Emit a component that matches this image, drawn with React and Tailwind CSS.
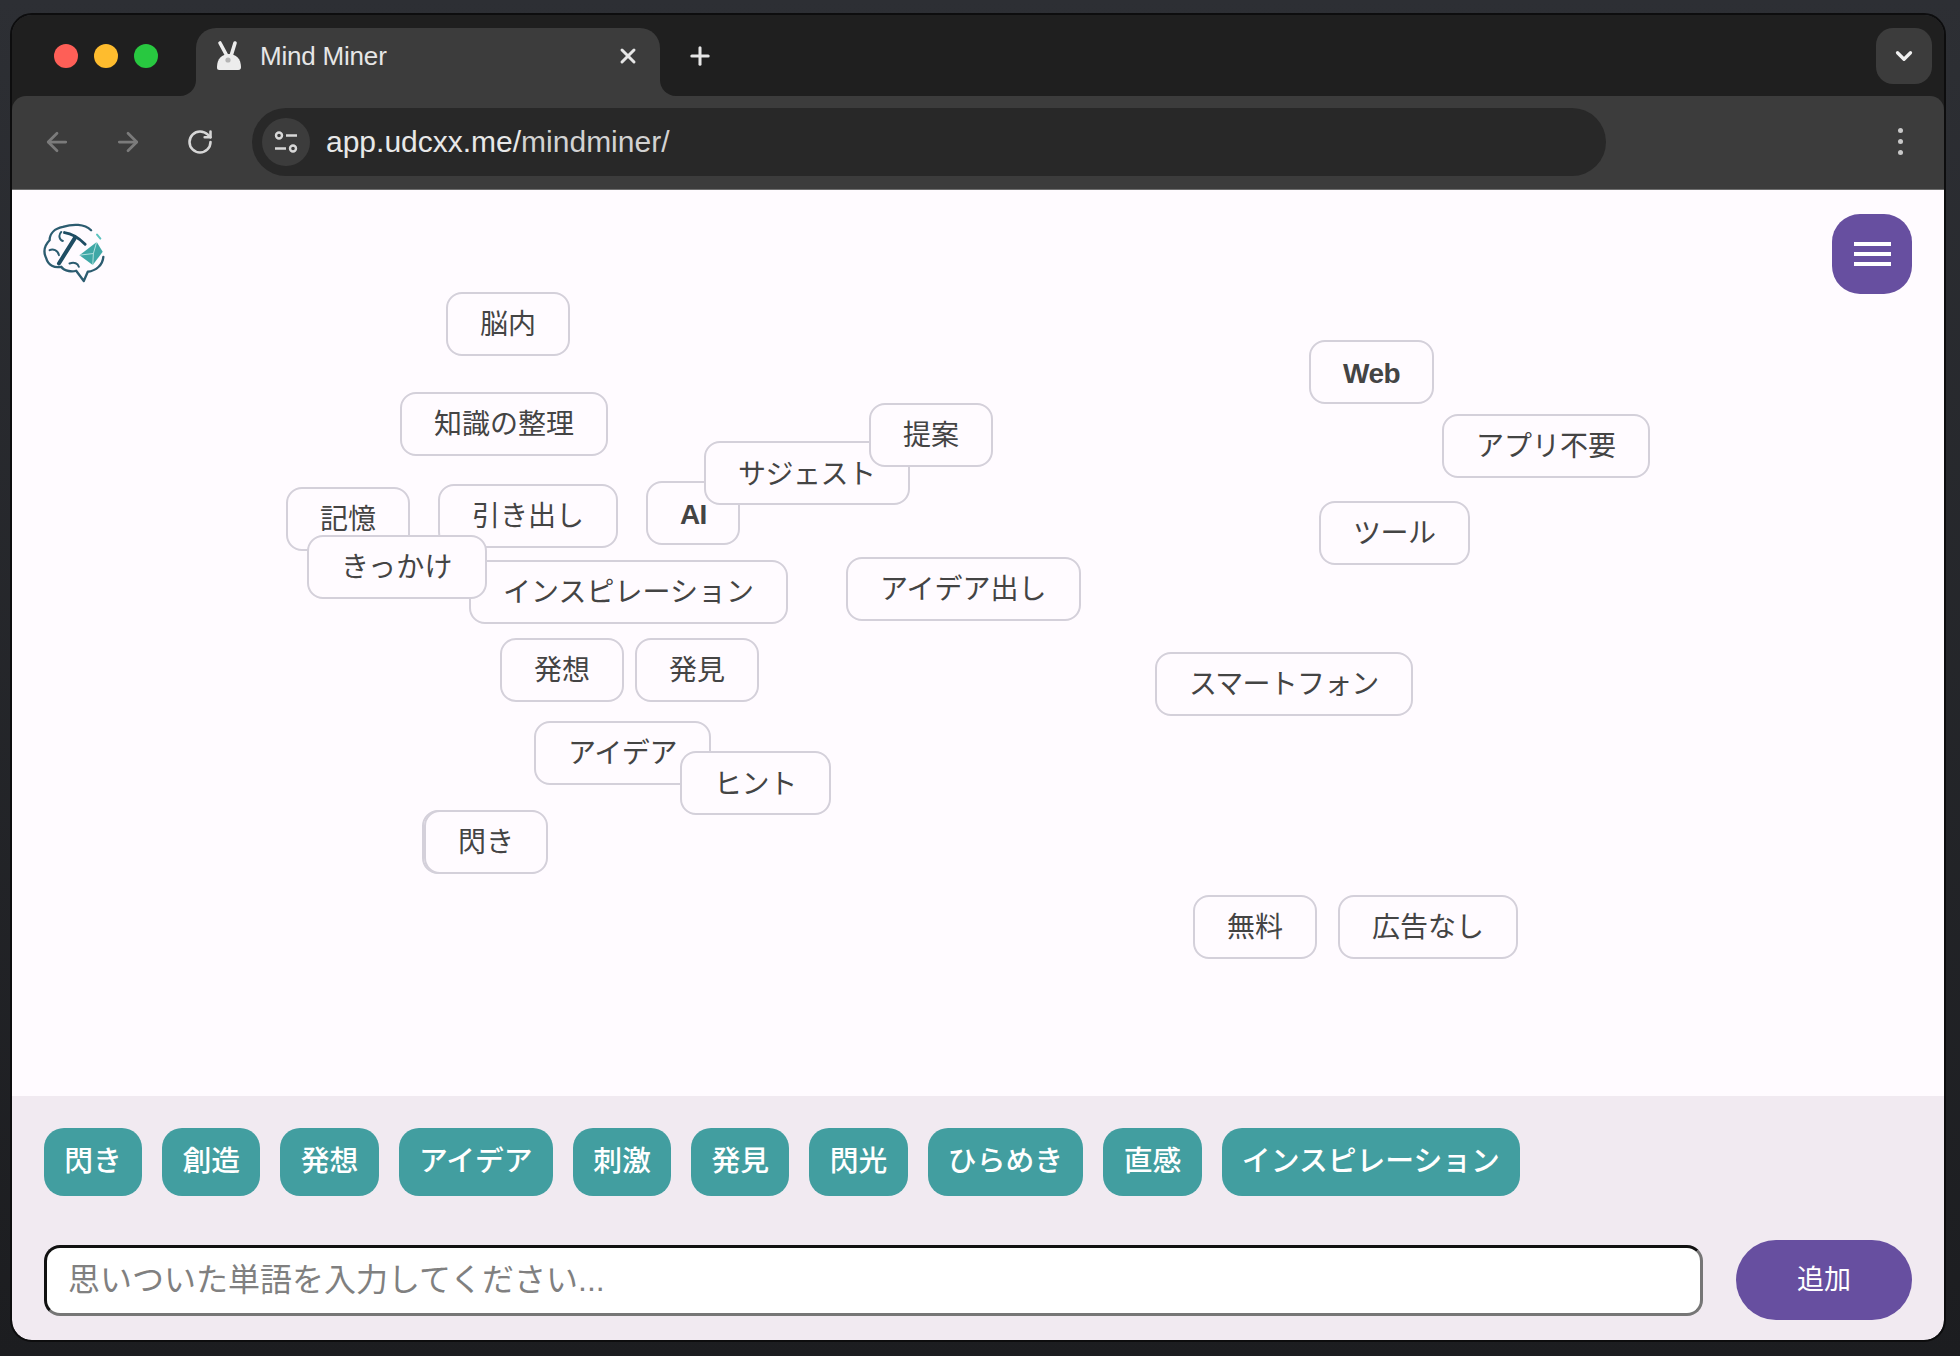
import React from 'react';
import { ArrowLeft, ArrowRight, RotateCw, X, Plus, ChevronDown } from 'lucide-react';

const nodes = [
    { text: '脳内', pos: 'left-[434px] top-[102px]' },
    { text: '知識の整理', pos: 'left-[388px] top-[203px]', fit: '-translate-y-px' },
    { text: '記憶', pos: 'left-[274px] top-[297px]' },
    { text: '引き出し', pos: 'left-[426px] top-[294px]' },
    { text: 'AI', pos: 'left-[634px] top-[291px]', bold: true, fit: 'tracking-[-0.8px]' },
    { text: 'サジェスト', pos: 'left-[692px] top-[251px]', fit: 'tracking-[-0.5px] pt-[3px]' },
    { text: '提案', pos: 'left-[857px] top-[213px]' },
    { text: 'インスピレーション', pos: 'left-[457px] top-[370px]' },
    { text: 'きっかけ', pos: 'left-[295px] top-[345px]', fit: 'tracking-[0.2px]' },
    { text: 'アイデア出し', pos: 'left-[834px] top-[367px]' },
    { text: '発想', pos: 'left-[488px] top-[448px]' },
    { text: '発見', pos: 'left-[623px] top-[448px]' },
    { text: 'アイデア', pos: 'left-[522px] top-[531px]', fit: 'tracking-[-0.4px]' },
    { text: 'ヒント', pos: 'left-[668px] top-[561px]', fit: 'tracking-[-0.4px] pt-[3px]' },
    { text: '閃き', pos: 'left-[410px] top-[620px]' },
    { text: '閃き', pos: 'left-[412px] top-[620px]' },
    { text: 'Web', pos: 'left-[1297px] top-[150px]', bold: true, fit: 'tracking-[-0.5px]' },
    { text: 'アプリ不要', pos: 'left-[1430px] top-[224px]' },
    { text: 'ツール', pos: 'left-[1307px] top-[311px]', fit: 'tracking-[-0.5px]' },
    { text: 'スマートフォン', pos: 'left-[1143px] top-[462px]', fit: 'tracking-[-0.8px]' },
    { text: '無料', pos: 'left-[1181px] top-[705px]' },
    { text: '広告なし', pos: 'left-[1326px] top-[705px]' },
];

const suggestions = ['閃き', '創造', '発想', 'アイデア', '刺激', '発見', '閃光', 'ひらめき', '直感', 'インスピレーション'];

function RabbitIcon() {
    return (
        <svg width="28" height="32" viewBox="0 0 28 32">
            <path d="M5 3 L12 16 M20 3 L16 16" stroke="#ececec" strokeWidth="3.6" strokeLinecap="round" fill="none" />
            <path d="M2 27 C2 19 7 14 14 14 C21 14 26 19 26 27 C26 30 24 30 22 30 L6 30 C3 30 2 30 2 27 Z" fill="#ececec" />
            <circle cx="13" cy="20" r="2.6" fill="#b4b4b4" />
        </svg>
    );
}

function TuneIcon() {
    return (
        <svg width="26" height="26" viewBox="0 0 26 26" fill="none" stroke="#d8d8d8" strokeWidth="2.4">
            <circle cx="6" cy="6.5" r="3" />
            <path d="M13 6.5 H24" />
            <path d="M2 19.5 H13" />
            <circle cx="20" cy="19.5" r="3" />
        </svg>
    );
}

function BrainLogo() {
    return (
        <svg width="63" height="63" viewBox="70 65 190 190" fill="none">
            <path d="M215 90 C195 70 160 70 130 80 C105 85 90 100 90 120 C75 135 70 155 80 175 C85 195 105 205 125 200 C135 215 160 215 170 212 L193 243 L205 215 C230 212 250 195 252 170" stroke="#2c5c70" strokeWidth="7" strokeLinecap="round" strokeLinejoin="round" />
            <path d="M125 95 C115 105 120 120 130 122 M90 150 C100 145 115 150 118 165 M150 190 C165 185 175 190 178 200" stroke="#2c5c70" strokeWidth="6" strokeLinecap="round" />
            <path d="M118 190 L165 115" stroke="#1f4d63" strokeWidth="12" strokeLinecap="round" />
            <path d="M135 97 C160 100 180 115 197 132" stroke="#1f4d63" strokeWidth="9" strokeLinecap="round" />
            <path d="M180 165 L232 125 L250 155 L220 195 Z" fill="#3fa8a6" />
            <path d="M232 125 L222 160 L180 165 M222 160 L220 195" stroke="#c9ebe8" strokeWidth="2.5" />
            <path d="M233 103 L243 115" stroke="#5cc3bf" strokeWidth="6" strokeLinecap="round" />
        </svg>
    );
}

export default function App() {
    return (
        <div className="w-[1960px] h-[1356px] overflow-hidden bg-gradient-to-b from-[#2d2f34] to-[#1c1d20] pt-[15px] pl-[12px] pr-[16px] pb-[16px] font-['Liberation_Sans','Noto_Sans_CJK_JP',sans-serif]">
            <div className="h-full flex flex-col rounded-[20px] overflow-hidden outline-2 outline-[#0d0d0e]">
                {/* Tab strip */}
                <div className="h-[81px] shrink-0 bg-[#1f1f1f] relative flex items-end pl-[184px]">
                    <div className="absolute left-[42px] top-[29px] flex gap-[16px]">
                        <span className="w-[24px] h-[24px] rounded-full bg-[#fe5f57]"></span>
                        <span className="w-[24px] h-[24px] rounded-full bg-[#febc2e]"></span>
                        <span className="w-[24px] h-[24px] rounded-full bg-[#28c840]"></span>
                    </div>
                    <div className="relative w-[464px] h-[68px] bg-[#3c3c3c] rounded-t-[20px] flex items-center pl-[19px] pr-[20px] pb-[12px] text-[#e6e6e6]">
                        <span className="absolute -left-[16px] bottom-0 w-[16px] h-[16px] bg-[#3c3c3c]">
                            <span className="block w-full h-full bg-[#1f1f1f] rounded-br-[16px]"></span>
                        </span>
                        <span className="absolute -right-[16px] bottom-0 w-[16px] h-[16px] bg-[#3c3c3c]">
                            <span className="block w-full h-full bg-[#1f1f1f] rounded-bl-[16px]"></span>
                        </span>
                        <RabbitIcon />
                        <span className="ml-[17px] text-[26px] tracking-[-0.2px]">Mind Miner</span>
                        <X className="ml-auto" size={24} strokeWidth={3} color="#e6e6e6" />
                    </div>
                    <Plus className="absolute left-[674px] top-[27px]" size={28} strokeWidth={2.6} color="#e6e6e6" />
                    <div className="absolute right-[12px] top-[13px] w-[56px] h-[56px] rounded-[17px] bg-[#3c3c3c] flex items-center justify-center">
                        <ChevronDown size={26} strokeWidth={3} color="#f0f0f0" />
                    </div>
                </div>

                {/* Toolbar */}
                <div className="h-[94px] shrink-0 bg-[#1f1f1f]">
                    <div className="h-full bg-[#3c3c3c] rounded-t-[14px] flex items-center pl-[30px] pr-[41px] pb-[2px] border-b border-[#6e6e6e]">
                        <ArrowLeft size={30} strokeWidth={2.2} color="#7b7b7b" />
                        <ArrowRight className="ml-[41px]" size={30} strokeWidth={2.2} color="#7b7b7b" />
                        <RotateCw className="ml-[43px]" size={28} strokeWidth={2.2} color="#d6d6d6" />
                        <div className="ml-[38px] w-[1354px] h-[68px] rounded-full bg-[#282828] flex items-center pl-[10px]">
                            <div className="w-[48px] h-[48px] rounded-full bg-[#3c3c3c] flex items-center justify-center">
                                <TuneIcon />
                            </div>
                            <span className="ml-[16px] text-[30px] text-[#e8e8e8]">app.udcxx.me/<span className="text-[#d2d2d2]">mindminer/</span></span>
                        </div>
                        <div className="ml-auto flex flex-col gap-[6px]">
                            <span className="w-[5px] h-[5px] rounded-full bg-[#c8c8c8]"></span>
                            <span className="w-[5px] h-[5px] rounded-full bg-[#c8c8c8]"></span>
                            <span className="w-[5px] h-[5px] rounded-full bg-[#c8c8c8]"></span>
                        </div>
                    </div>
                </div>

                {/* Word canvas */}
                <div className="flex-1 relative bg-[#fffbff]">
                    <div className="absolute left-[31px] top-[32px]">
                        <BrainLogo />
                    </div>
                    <button className="absolute right-[32px] top-[24px] w-[80px] h-[80px] rounded-[28px] bg-[#674fa0] flex flex-col items-center justify-center gap-[6px]">
                        <span className="w-[37px] h-[4px] bg-white"></span>
                        <span className="w-[37px] h-[4px] bg-white"></span>
                        <span className="w-[37px] h-[4px] bg-white"></span>
                    </button>
                    {nodes.map((n, i) => (
                        <div
                            key={i}
                            className={`absolute h-[64px] px-[32px] flex items-center rounded-[16px] border-2 border-[#d4d0da] bg-[#fffbff] text-[28px] text-[#444444] whitespace-nowrap ${n.pos} ${n.bold ? 'font-bold pt-[4px]' : 'pt-[1px]'} ${n.fit || ''}`}
                        >
                            {n.text}
                        </div>
                    ))}
                </div>

                {/* Suggestions and input */}
                <div className="h-[244px] shrink-0 bg-[#f1eaf1] flex flex-col pl-[32px] pr-[32px] pt-[32px]">
                    <div className="flex gap-[20px]">
                        {suggestions.map((s, i) => (
                            <span key={i} className="h-[68px] px-[20.3px] flex items-center rounded-[20px] bg-[#429ea0] text-[28.8px] font-medium text-white whitespace-nowrap">
                                {s}
                            </span>
                        ))}
                    </div>
                    <div className="mt-[44px] flex items-center gap-[33px]">
                        <input
                            className="flex-1 h-[71px] px-[21px] rounded-[16px] bg-white border-[3px] border-t-[#111111] border-l-[#111111] border-r-[#767676] border-b-[#767676] text-[32px] placeholder:text-[#808080] outline-none"
                            placeholder="思いついた単語を入力してください..."
                        />
                        <button className="w-[176px] h-[80px] rounded-full bg-[#674fa0] text-[27px] text-white">追加</button>
                    </div>
                </div>
            </div>
        </div>
    );
}
